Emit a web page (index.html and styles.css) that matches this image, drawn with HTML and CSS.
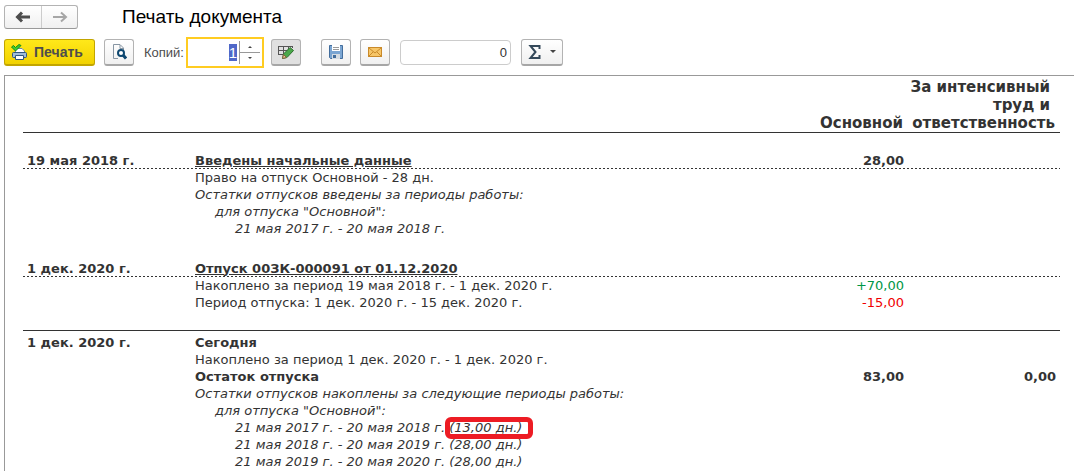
FILE: index.html
```html
<!DOCTYPE html>
<html lang="ru">
<head>
  <meta charset="UTF-8">
  <title>Печать документа</title>
  <meta name="viewport" content="width=device-width,initial-scale=1">
  <link rel="stylesheet" href="styles.css">
</head>
<body>
  <header class="titlebar">
    <div class="nav">
      <button type="button" class="nav-btn" aria-label="Назад">
        <svg width="16" height="12" viewBox="0 0 16 12"><path d="M2 6 H15 M7 1.5 L2.5 6 L7 10.5" fill="none" stroke="#4d4d4d" stroke-width="3"/></svg>
      </button>
      <button type="button" class="nav-btn" aria-label="Вперед">
        <svg width="16" height="12" viewBox="0 0 16 12"><path d="M1 6 H14 M9 1.5 L14 6 L9 10.5" fill="none" stroke="#a6a6a6" stroke-width="2"/></svg>
      </button>
    </div>
    <h1>Печать документа</h1>
  </header>

  <div class="toolbar">
    <button type="button" class="btn print">
      <svg width="16" height="16" viewBox="0 0 16 16">
        <path d="M4.5 4.5 H11 L13.5 7 V9 H4.5 Z" fill="#fff" stroke="#6889a8"/>
        <rect x="1.5" y="8.5" width="14" height="5" rx="1" fill="#9fbcd8" stroke="#30577f"/>
        <path d="M4.5 11.5 H12.5 V15.5 H4.5 Z" fill="#fff" stroke="#30577f"/>
        <path d="M0.5 3 L2.5 1.5 L4.5 3.5 L8 0.5 L10 1.5 L4.5 7 Z" fill="#3ccc2f" stroke="#148a14"/>
      </svg>
      <span>Печать</span>
    </button>
    <button type="button" class="btn icon" aria-label="Предварительный просмотр">
      <svg width="16" height="16" viewBox="0 0 16 16">
        <path d="M7 14.5 H2.5 V0.5 H9 L12.5 4 V6 M9 1 V4.5 H12.5" fill="none" stroke="#8795a3"/>
        <circle cx="10" cy="9" r="3" fill="#fff" stroke="#0d4770" stroke-width="2"/>
        <path d="M12 11 L15 14.5" stroke="#0d4770" stroke-width="3"/>
      </svg>
    </button>
    <label for="copies">Копий:</label>
    <div class="copies">
      <input type="text" id="copies" inputmode="numeric" value="1">
      <div class="spin">
        <button type="button" aria-label="Больше"><svg width="4" height="2" viewBox="0 0 4 2"><path d="M0 2 L2 0 L4 2 Z" fill="#444"/></svg></button>
        <button type="button" aria-label="Меньше"><svg width="4" height="2" viewBox="0 0 4 2"><path d="M0 0 L2 2 L4 0 Z" fill="#444"/></svg></button>
      </div>
    </div>
    <button type="button" class="btn icon pressed" aria-label="Редактирование" aria-pressed="true">
      <svg width="18" height="16" viewBox="0 0 18 16">
        <path d="M1 2.5 H16 M1 6.5 H11 M1 10.5 H7 M1.5 2 V11 M6.5 2 V11 M11.5 2 V6 M15.5 2 V4" fill="none" stroke="#555"/>
        <path d="M5.5 14.5 L6.5 10 L13 3.5 L16.5 6.5 L10 13.5 Z" fill="#4aa84a" stroke="#2c6e2c"/>
        <path d="M5.5 14.5 L6.5 10.5 L9.5 13.5 Z" fill="#f0c890" stroke="#806040"/>
      </svg>
    </button>
    <button type="button" class="btn icon save" aria-label="Сохранить">
      <svg width="16" height="16" viewBox="0 0 16 16">
        <path d="M1.5 1.5 H14.5 V14.5 H2.5 L1.5 13.5 Z" fill="#7aa5d2" stroke="#426d9c"/>
        <path d="M4 1 H12 V7 H4 Z" fill="#fff"/>
        <path d="M5 3.5 H11 M5 5.5 H11" stroke="#999"/>
        <path d="M4 10 H12 V15 H4 Z" fill="#d5dce2"/>
        <path d="M5 11 H8 V14 H5 Z" fill="#426d9c"/>
      </svg>
    </button>
    <button type="button" class="btn icon" aria-label="Отправить по почте">
      <svg width="16" height="16" viewBox="0 0 16 16">
        <rect x="1.5" y="3.5" width="13" height="9" fill="#f7c668" stroke="#c98a2a"/>
        <path d="M2 4 L8 9 L14 4 M2 12 L6 8 M14 12 L10 8" fill="none" stroke="#c98a2a"/>
      </svg>
    </button>
    <input type="text" class="sum" aria-label="Сумма" value="0">
    <button type="button" class="btn sigma" aria-label="Показатели">
      <svg width="14" height="14" viewBox="0 0 14 14"><path d="M11.5 4 V1 H2.5 L7.5 7 L2.5 13 H11.5 V10" fill="none" stroke="#34495a" stroke-width="2"/></svg>
      <svg width="6" height="4" viewBox="0 0 6 4"><path d="M0 0 H6 L3 3 Z" fill="#444"/></svg>
    </button>
  </div>

  <main class="sheet">
    <table class="report">
      <colgroup>
        <col class="col-date">
        <col>
        <col class="col-main">
        <col class="col-extra">
      </colgroup>
      <thead>
        <tr>
          <th></th>
          <th></th>
          <th>Основной</th>
          <th><span class="inset">За интенсивный<br>труд и</span><br>ответственность</th>
        </tr>
      </thead>
      <tbody>
        <tr class="gap"><td colspan="4"></td></tr>
        <tr class="event"><td>19 мая 2018 г.</td><td><a href="#">Введены начальные данные</a></td><td>28,00</td><td></td></tr>
        <tr><td></td><td>Право на отпуск Основной - 28 дн.</td><td></td><td></td></tr>
        <tr class="note"><td></td><td>Остатки отпусков введены за периоды работы:</td><td></td><td></td></tr>
        <tr class="note level1"><td></td><td>для отпуска "Основной":</td><td></td><td></td></tr>
        <tr class="note level2"><td></td><td>21 мая 2017 г. - 20 мая 2018 г.</td><td></td><td></td></tr>
      </tbody>
      <tbody>
        <tr class="gap wide"><td colspan="4"></td></tr>
        <tr class="event"><td>1 дек. 2020 г.</td><td><a href="#">Отпуск 00ЗК-000091 от 01.12.2020</a></td><td></td><td></td></tr>
        <tr><td></td><td>Накоплено за период 19 мая 2018 г. - 1 дек. 2020 г.</td><td class="plus">+70,00</td><td></td></tr>
        <tr><td></td><td>Период отпуска: 1 дек. 2020 г. - 15 дек. 2020 г.</td><td class="minus">-15,00</td><td></td></tr>
      </tbody>
      <tbody>
        <tr class="gap ruled"><td colspan="4"></td></tr>
        <tr class="total first"><td>1 дек. 2020 г.</td><td>Сегодня</td><td></td><td></td></tr>
        <tr><td></td><td>Накоплено за период 1 дек. 2020 г. - 1 дек. 2020 г.</td><td></td><td></td></tr>
        <tr class="total"><td></td><td>Остаток отпуска</td><td>83,00</td><td>0,00</td></tr>
        <tr class="note"><td></td><td>Остатки отпусков накоплены за следующие периоды работы:</td><td></td><td></td></tr>
        <tr class="note level1"><td></td><td>для отпуска "Основной":</td><td></td><td></td></tr>
        <tr class="note level2"><td></td><td>21 мая 2017 г. - 20 мая 2018 г. <span class="marked">(13,00 дн.)</span></td><td></td><td></td></tr>
        <tr class="note level2"><td></td><td>21 мая 2018 г. - 20 мая 2019 г. (28,00 дн.)</td><td></td><td></td></tr>
        <tr class="note level2"><td></td><td>21 мая 2019 г. - 20 мая 2020 г. (28,00 дн.)</td><td></td><td></td></tr>
      </tbody>
    </table>
  </main>
<script>
const copies = document.getElementById("copies");
copies.focus();
copies.select();
</script>
</body>
</html>
```
FILE: styles.css
```css
* {
  box-sizing: border-box;
}
body {
  margin: 0;
  min-height: 100vh;
  display: flex;
  flex-direction: column;
  background: #fff;
  color: #333;
  font-family: "Liberation Sans", Arial, sans-serif;
  font-size: 13px;
}
button, input {
  font: inherit;
  color: inherit;
}
svg {
  display: block;
  flex: none;
}
.titlebar {
  display: flex;
  align-items: center;
  gap: 44px;
  padding: 5px 4px 0;
}
.titlebar h1 {
  margin: 0;
  font-size: 19px;
  font-weight: normal;
  line-height: 24px;
  color: #000;
}
.nav {
  display: flex;
  border: 1px solid #b3b3b3;
  border-bottom-color: #999;
  border-radius: 3px;
  background: linear-gradient(#fff, #f0f0f0);
}
.nav-btn {
  display: flex;
  align-items: center;
  justify-content: center;
  width: 36px;
  height: 22px;
  padding: 0;
  border: none;
  background: none;
}
.nav-btn + .nav-btn {
  border-left: 1px solid #ccc;
}
.toolbar {
  display: flex;
  align-items: center;
  height: 46px;
  padding: 0 4px;
}
.btn {
  display: flex;
  align-items: center;
  justify-content: center;
  height: 27px;
  padding: 0;
  border: 1px solid #b3b3b3;
  border-bottom: 2px solid #a6a6a6;
  border-radius: 3px;
  background: linear-gradient(#fff, #f0f0f0);
}
.btn.icon {
  width: 30px;
}
.btn.print {
  justify-content: flex-start;
  gap: 7px;
  width: 91px;
  margin-right: 9px;
  padding-left: 6px;
  border-color: #c2a500;
  background: linear-gradient(#ffe81a, #f2d200);
  color: #4d4d4d;
  font-size: 14px;
  font-weight: bold;
}
.btn.pressed {
  margin-left: 7px;
  background: #e0e0e0;
}
.btn.save {
  margin: 0 9px 0 20px;
}
.toolbar label {
  margin: 0 2px 0 10px;
  color: #4d4d4d;
}
.copies {
  display: flex;
  align-items: center;
  width: 78px;
  height: 31px;
  padding-right: 2px;
  border: 2px solid #ffcc21;
}
.copies input {
  flex: 1;
  min-width: 0;
  height: 23px;
  padding: 0 2px 0 0;
  border: none;
  border-right: 1px solid #999;
  outline: none;
  font-size: 15px;
  text-align: right;
}
.copies input::selection {
  background: #5068c8;
  color: #fff;
}
.spin {
  display: flex;
  flex-direction: column;
  width: 20px;
}
.spin button {
  display: flex;
  align-items: center;
  justify-content: center;
  height: 11px;
  padding: 0;
  border: none;
  background: none;
}
.spin button + button {
  border-top: 1px solid #999;
}
.sum {
  width: 111px;
  height: 25px;
  margin: 0 10px;
  padding: 0 3px;
  border: 1px solid #ccc;
  border-radius: 4px;
  text-align: right;
}
.btn.sigma {
  gap: 8px;
  width: 42px;
}
.sheet {
  flex: 1;
  margin-left: 4px;
  padding: 2px 14px 0 18px;
  border: solid #999;
  border-width: 1px 0 0 1px;
}

/* report */
.report {
  width: 100%;
  table-layout: fixed;
  border-collapse: collapse;
  font-family: Verdana, "DejaVu Sans", sans-serif;
  font-size: 13px;
  line-height: 17px;
}
.col-date { width: 168px; }
.col-main { width: 130px; }
.col-extra { width: 152px; }
.report th {
  padding: 0 5px 0 0;
  border-bottom: 1px solid #333;
  font-size: 15px;
  line-height: 18px;
  text-align: right;
  vertical-align: bottom;
  white-space: nowrap;
}
.inset {
  display: inline-block;
  padding-right: 5px;
}
.report td {
  height: 17px;
  padding: 0 4px;
  white-space: nowrap;
}
.report td:nth-child(n+3) {
  text-align: right;
}
.report .gap td {
  height: 19px;
}
.report .gap.wide td {
  height: 23px;
}
.report .gap.ruled td {
  height: 20px;
  border-bottom: 1px solid #333;
}
.event, .total {
  font-weight: bold;
}
.report .total.first td {
  padding-top: 3px;
}
.event {
  background: repeating-linear-gradient(90deg, #333 0 2px, transparent 2px 4px) left bottom / 100% 1px no-repeat;
}
.event a {
  color: inherit;
}
.note {
  font-style: italic;
}
.report .level1 td:nth-child(2) { padding-left: 24px; }
.report .level2 td:nth-child(2) { padding-left: 44px; }
.plus { color: #009646; }
.minus { color: #f00000; }
.marked {
  position: relative;
}
/* red marker frame drawn over the text */
.marked::after {
  content: "";
  position: absolute;
  inset: -3px -11px -4px -4px;
  border: 5px solid #ed1c24;
  border-radius: 6px;
}
```
